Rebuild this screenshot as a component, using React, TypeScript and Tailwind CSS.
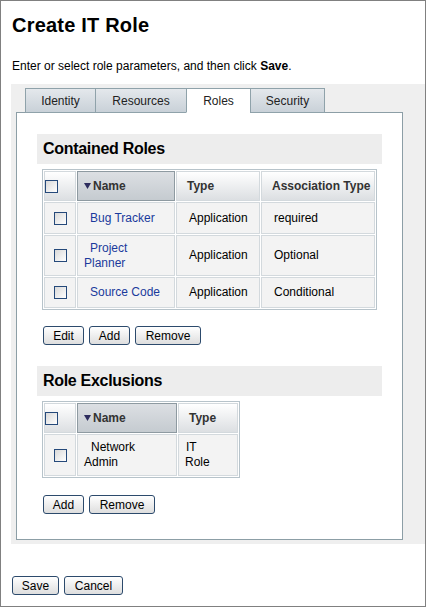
import type React from "react";

const Checkbox: React.FC = () => (
  <span className="inline-block w-[13px] h-[13px] border border-[#25497a] bg-linear-to-br from-[#d9d9d9] to-white align-middle" />
);

const SortArrow: React.FC = () => (
  <svg width="7" height="6" viewBox="0 0 7 6" className="inline-block mr-[2px] align-[1px]">
    <polygon points="0,0 7,0 3.5,6" fill="#2e2d5e" />
  </svg>
);

const Button: React.FC<{ label: string; className: string }> = ({
  label,
  className,
}) => (
  <button
    className={`h-[19px] border border-[#2c4a6c] rounded-[3px] bg-linear-to-b from-white to-[#dedede] text-[12px] leading-none text-black ${className}`}
  >
    {label}
  </button>
);

const th = "h-[30px] border border-[#d3d9dd] bg-linear-to-b from-white to-[#dcdfe2] text-left font-bold text-[12px] text-[#333] align-middle";
const thSorted = "h-[30px] border border-[#8e9aa1] bg-linear-to-b from-[#dcdfe3] to-[#c5cbd0] text-left font-bold text-[12px] text-[#333] align-middle pl-[6px]";
const td = "border border-[#d3d9dd] bg-[#f3f3f3] text-[12px] leading-[15px] align-middle";

const containedRoles = [
  { name: ["Bug Tracker"], type: "Application", assoc: "required", h: "h-[32px]" },
  { name: ["Project", "Planner"], type: "Application", assoc: "Optional", h: "h-[41px]" },
  { name: ["Source Code"], type: "Application", assoc: "Conditional", h: "h-[31px]" },
];

const tabs = [
  { label: "Identity", w: "w-[70px]" },
  { label: "Resources", w: "w-[91px]" },
  { label: "Roles", w: "w-[64px]", active: true },
  { label: "Security", w: "w-[75px] border-r" },
];

export default function App() {
  return (
    <div className="w-[426px] h-[607px] border border-[#808080] bg-white font-['Liberation_Sans',Arial,sans-serif] text-black overflow-hidden">
      <h1 className="ml-[11px] mt-[12px] text-[20px] leading-6 font-bold tracking-[0.2px]">
        Create IT Role
      </h1>
      <p className="ml-[11px] mt-[22px] text-[12px] leading-[15px]">
        Enter or select role parameters, and then click <b>Save</b>.
      </p>

      {/* Tab panel */}
      <div className="ml-[10px] mt-[10px] bg-[#efefef] pt-[4px] pl-[5px] pb-[4px]">
        <div className="relative z-10 ml-[9px] flex h-[25px] -mb-px">
          {tabs.map((t) => (
            <div
              key={t.label}
              className={`${t.w} border-l border-t border-[#8fa2aa] flex items-center justify-center text-[12px] text-[#222] ${
                t.active
                  ? "bg-white border-b border-b-white"
                  : "bg-linear-to-b from-[#e4e8ec] to-[#c9d1d8] border-b"
              }`}
            >
              {t.label}
            </div>
          ))}
        </div>
        <div className="w-[387px] h-[428px] border border-[#8c9ea6] bg-white px-[20px] pt-[21px]">
          {/* Contained Roles */}
          <div className="h-[30px] bg-[#ededed] flex items-center pl-[6px] text-[16px] font-bold tracking-[-0.3px]">
            Contained Roles
          </div>
          <table className="mt-[5px] ml-[5px] table-fixed border-separate border-spacing-[1px] border border-[#b7c3ca]">
            <thead>
              <tr>
                <th className={`${th} w-[32px] text-center`}>
                  <Checkbox />
                </th>
                <th className={`${thSorted} w-[98px]`}>
                  <SortArrow />
                  Name
                </th>
                <th className={`${th} w-[84px] pl-[10px]`}>Type</th>
                <th className={`${th} w-[114px] pl-[10px]`}>Association Type</th>
              </tr>
            </thead>
            <tbody>
              {containedRoles.map((r) => (
                <tr key={r.name.join(" ")}>
                  <td className={`${td} ${r.h} text-center`}>
                    <Checkbox />
                  </td>
                  <td className={`${td} pl-[6px] text-[#1a3a9c]`}>
                    <span className="pl-[6px]">{r.name[0]}</span>
                    {r.name[1] && (
                      <>
                        <br />
                        {r.name[1]}
                      </>
                    )}
                  </td>
                  <td className={`${td} pl-[12px] text-black`}>{r.type}</td>
                  <td className={`${td} pl-[12px] text-black`}>{r.assoc}</td>
                </tr>
              ))}
            </tbody>
          </table>
          <div className="mt-[16px] ml-[6px] flex gap-[5px]">
            <Button label="Edit" className="w-[41px]" />
            <Button label="Add" className="w-[41px]" />
            <Button label="Remove" className="w-[66px]" />
          </div>

          {/* Role Exclusions */}
          <div className="mt-[21px] h-[30px] bg-[#ededed] flex items-center pl-[6px] text-[16px] font-bold tracking-[-0.3px]">
            Role Exclusions
          </div>
          <table className="mt-[5px] ml-[5px] table-fixed border-separate border-spacing-[1px] border border-[#b7c3ca]">
            <thead>
              <tr>
                <th className={`${th} w-[32px] text-center`}>
                  <Checkbox />
                </th>
                <th className={`${thSorted} w-[100px]`}>
                  <SortArrow />
                  Name
                </th>
                <th className={`${th} w-[60px] pl-[10px]`}>Type</th>
              </tr>
            </thead>
            <tbody>
              <tr>
                <td className={`${td} h-[42px] text-center`}>
                  <Checkbox />
                </td>
                <td className={`${td} pl-[6px] text-black`}>
                  <span className="pl-[7px]">Network</span>
                  <br />
                  Admin
                </td>
                <td className={`${td} pl-[6px] text-black`}>
                  <span className="pl-[1px]">IT</span>
                  <br />
                  Role
                </td>
              </tr>
            </tbody>
          </table>
          <div className="mt-[17px] ml-[6px] flex gap-[5px]">
            <Button label="Add" className="w-[41px]" />
            <Button label="Remove" className="w-[66px]" />
          </div>
        </div>
      </div>

      <div className="mt-[32px] ml-[11px] flex gap-[5px]">
        <Button label="Save" className="w-[47px]" />
        <Button label="Cancel" className="w-[59px]" />
      </div>
    </div>
  );
}
